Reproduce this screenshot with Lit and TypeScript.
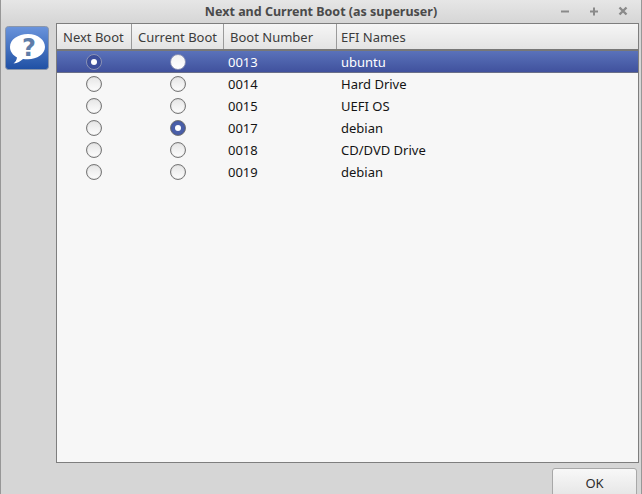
import { LitElement, css, html } from 'lit';
import { customElement } from 'lit/decorators.js';

interface BootEntry {
  num: string;
  name: string;
  next?: boolean;
  current?: boolean;
}

const ENTRIES: BootEntry[] = [
  { num: '0013', name: 'ubuntu', next: true },
  { num: '0014', name: 'Hard Drive' },
  { num: '0015', name: 'UEFI OS' },
  { num: '0017', name: 'debian', current: true },
  { num: '0018', name: 'CD/DVD Drive' },
  { num: '0019', name: 'debian' },
];

@customElement('app-root')
export class AppRoot extends LitElement {
  static override styles = css`
    :host {
      display: block;
      width: 642px;
      height: 494px;
      overflow: hidden;
      font-family: 'Noto Sans', sans-serif;
      font-size: 13px;
      color: #2c2c2c;
    }

    .window {
      display: flex;
      flex-direction: column;
      height: 494px;
      box-sizing: border-box;
      background: #d6d6d6;
      border-left: 1px solid #979797;
      border-right: 1px solid #979797;
    }

    .titlebar {
      flex: none;
      height: 23px;
      display: flex;
      align-items: center;
      justify-content: center;
      position: relative;
      background: linear-gradient(#e6e6e6, #d6d6d6);
      font-weight: 700;
      font-size: 12.5px;
      color: #4a4a4a;
    }

    .controls {
      position: absolute;
      top: 5px;
      right: 12px;
      display: flex;
      gap: 17px;
    }

    .controls svg {
      display: block;
      width: 12px;
      height: 12px;
    }

    .body {
      flex: none;
      display: flex;
      height: 440px;
    }

    .side {
      flex: none;
      width: 55px;
      padding: 3px 0 0 4px;
      box-sizing: border-box;
    }

    .help {
      display: block;
      width: 45px;
      height: 45px;
    }

    .frame {
      flex: none;
      width: 583px;
      box-sizing: border-box;
      border: 1px solid #7e7e7e;
      background: #f7f7f7;
    }

    .row {
      display: grid;
      grid-template-columns: 75px 92px 113px 1fr;
      align-items: center;
      height: 22px;
      color: #141414;
    }

    .row.selected {
      background: linear-gradient(#5a72ba, #3f509c);
      color: #fff;
      box-shadow: inset 0 -1px 0 #6a6f88;
    }

    .head {
      height: 27px;
      background: linear-gradient(#f6f6f6, #e3e3e3);
      border-bottom: 2px solid #777;
      box-sizing: border-box;
      color: #3c3c3c;
      align-items: stretch;
    }

    .head div {
      display: flex;
      align-items: center;
      padding-left: 6px;
      border-right: 1px solid #9a9a9a;
    }

    .head div:last-child {
      border-right: none;
      padding-left: 4px;
    }

    .radio-cell {
      display: flex;
      justify-content: center;
      padding-right: 1px;
    }

    .radio {
      width: 16px;
      height: 16px;
      box-sizing: border-box;
      border-radius: 50%;
      border: 1px solid #777;
      background: linear-gradient(#e6e6e6, #fdfdfd);
      box-shadow: inset 0 0 1px #9a9a9a;
      display: flex;
      align-items: center;
      justify-content: center;
    }

    .radio.on {
      background: #4a5fa8;
      box-shadow: inset 0 0 1px #2f3f80;
    }

    .radio.on::after {
      content: '';
      width: 6px;
      height: 6px;
      border-radius: 50%;
      background: #fff;
    }

    .selected .radio {
      border-color: #8c93b5;
    }

    .selected .radio.on {
      background: #3d4f9c;
    }

    .selected .radio:not(.on) {
      background: linear-gradient(#f2f2f2, #fff);
      box-shadow: none;
    }

    .num {
      padding-left: 4px;
    }

    .name {
      padding-left: 4px;
    }

    .footer {
      flex: 1;
      display: flex;
      justify-content: flex-end;
      align-items: flex-start;
      padding: 5px 4px 0 0;
    }

    .ok {
      width: 85px;
      height: 40px;
      box-sizing: border-box;
      border: 1px solid #a8a8a8;
      border-radius: 3px 3px 0 0;
      background: linear-gradient(#f8f8f8, #dedede);
      font: inherit;
      color: #2c2c2c;
      padding: 0 0 11px 0;
    }
  `;

  private renderRadio(on: boolean | undefined) {
    return html`<div class="radio-cell">
      <span class="radio ${on ? 'on' : ''}"></span>
    </div>`;
  }

  override render() {
    return html`
      <div class="window">
        <div class="titlebar">
          Next and Current Boot (as superuser)
          <div class="controls">
            <svg viewBox="0 0 12 12"><path d="M2 6.500h8" stroke="#8a8a8a" stroke-width="2" /></svg>
            <svg viewBox="0 0 12 12"><path d="M2 6.500h8M6 2.500v8" stroke="#8a8a8a" stroke-width="2" /></svg>
            <svg viewBox="0 0 12 12"><path d="M2.500 2.500l7 7M9.500 2.500l-7 7" stroke="#8a8a8a" stroke-width="2.400" /></svg>
          </div>
        </div>
        <div class="body">
          <div class="side">
            <svg class="help" viewBox="0 0 45 45">
              <defs>
                <linearGradient id="tile" x1="0" y1="0" x2="0" y2="1">
                  <stop offset="0" stop-color="#6a94dc" />
                  <stop offset="1" stop-color="#1f50a4" />
                </linearGradient>
              </defs>
              <rect x="0.500" y="0.500" width="43" height="43" rx="3" fill="url(#tile)" stroke="#8a96aa" />
              <path
                d="M23 8c-10 0-18 5.500-18 13 0 4.500 3 8.300 7 10.500-.3 2.500-1.500 4.500-3.500 6 4-.5 7-2.300 9.500-4.600 1.500.2 3 .3 5 .3 9 0 17-5.200 17-12.200S33 8 23 8z"
                fill="#fff"
              />
              <text x="24" y="30" text-anchor="middle" font-family="DejaVu Sans" font-weight="700" font-size="24" fill="#5f7da8">?</text>
            </svg>
          </div>
          <div class="frame">
            <div class="row head">
              <div>Next Boot</div>
              <div>Current Boot</div>
              <div>Boot Number</div>
              <div>EFI Names</div>
            </div>
            ${ENTRIES.map(
              (e, i) => html`
                <div class="row ${i === 0 ? 'selected' : ''}">
                  ${this.renderRadio(e.next)} ${this.renderRadio(e.current)}
                  <div class="num">${e.num}</div>
                  <div class="name">${e.name}</div>
                </div>
              `,
            )}
          </div>
        </div>
        <div class="footer"><button class="ok">OK</button></div>
      </div>
    `;
  }
}
